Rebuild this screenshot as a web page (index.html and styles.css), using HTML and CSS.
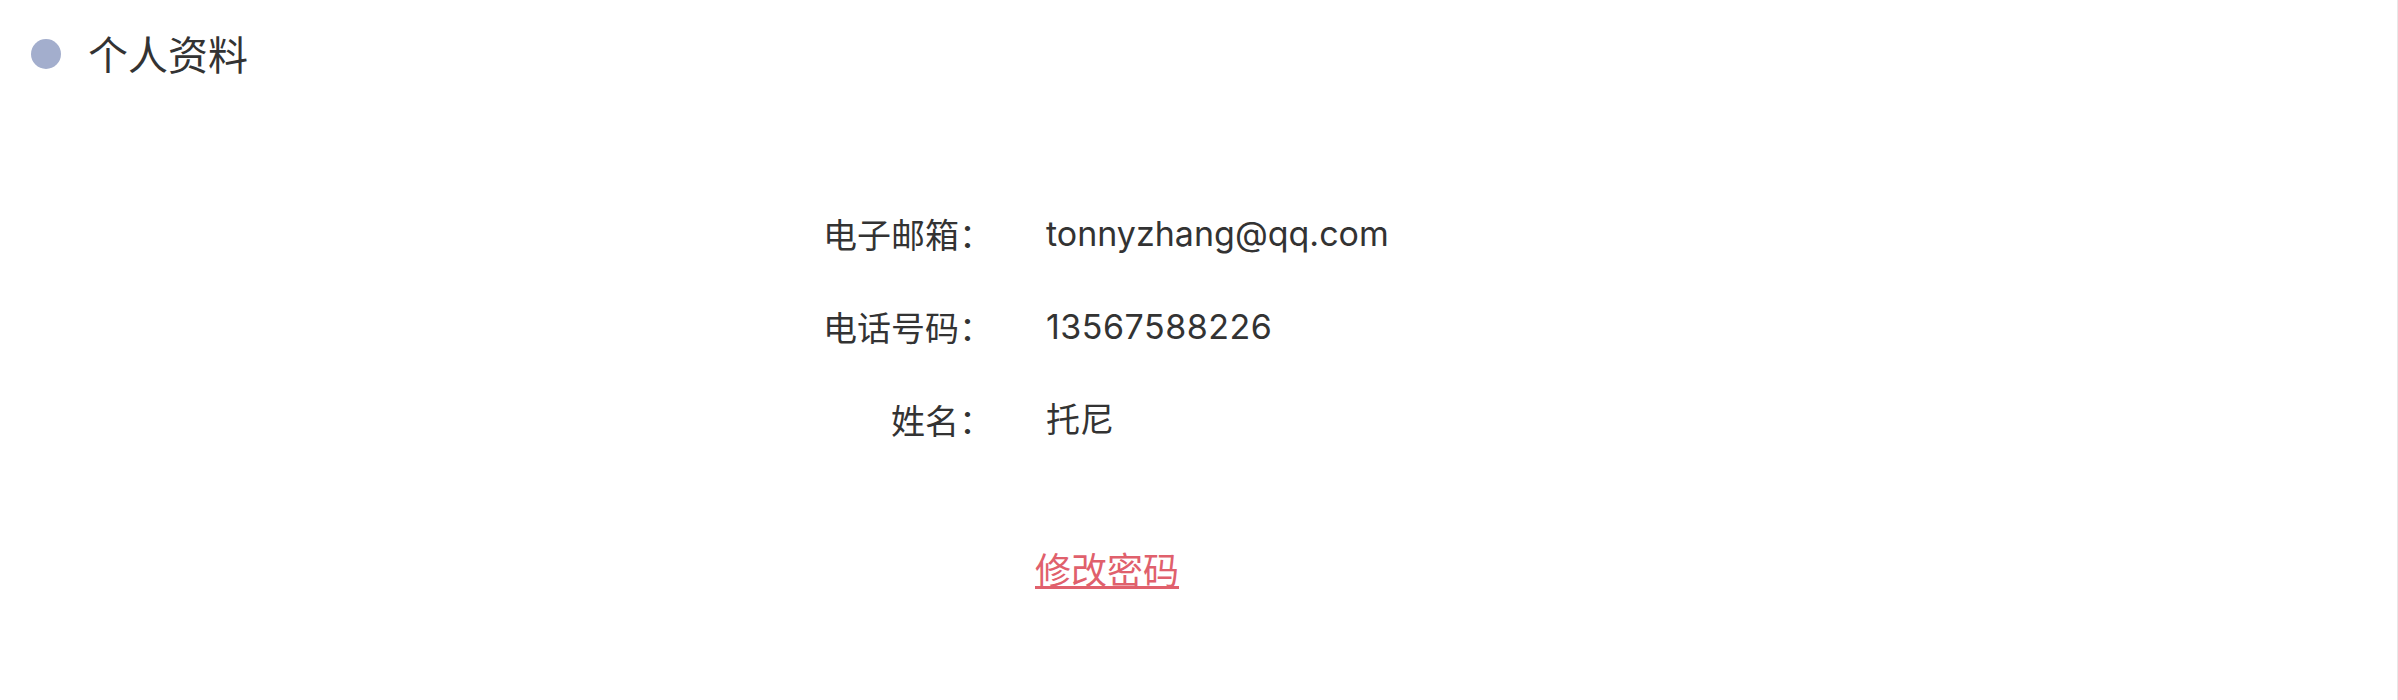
FILE: index.html
```html
<!DOCTYPE html>
<html lang="zh-CN">
<head>
<meta charset="utf-8">
<title>个人资料</title>
<link rel="stylesheet" href="styles.css">
</head>
<body>
<div class="page">
  <div class="header">
    <span class="dot"></span>
    <h2 class="title">个人资料</h2>
  </div>
  <div class="info">
    <div class="row"><span class="label">电子邮箱：</span><span class="value">tonnyzhang@qq.com</span></div>
    <div class="row"><span class="label">电话号码：</span><span class="value value-num">13567588226</span></div>
    <div class="row"><span class="label">姓名：</span><span class="value">托尼</span></div>
  </div>
  <div class="actions"><a class="link" href="#">修改密码</a></div>
</div>
</body>
</html>
```

FILE: styles.css
```css
html, body {
  margin: 0;
  padding: 0;
  background: #ffffff;
}
.page {
  box-sizing: border-box;
  width: 2398px;
  height: 700px;
  border-right: 1px solid #e8e8e8;
  color: #333333;
  font-family: Inter, "Noto Sans CJK SC", sans-serif;
}
.header {
  display: flex;
  align-items: center;
  padding: 33px 0 0 31px;
  height: 40px;
}
.dot {
  width: 30px;
  height: 30px;
  border-radius: 50%;
  background: #a3aecd;
  flex: none;
  margin-top: 2px;
}
.title {
  margin: 0 0 0 27px;
  font-family: "Noto Sans CJK SC", sans-serif;
  font-weight: 400;
  font-size: 40px;
  line-height: 40px;
  color: #333333;
}
.info {
  margin-top: 114px;
  padding-left: 823px;
}
.row {
  display: flex;
  align-items: center;
  height: 93px;
  gap: 53px;
}
.label {
  width: 170px;
  text-align: right;
  font-family: "Noto Sans CJK SC", sans-serif;
  font-size: 34px;
  line-height: 48px;
}
.value {
  font-family: Inter, "Noto Sans CJK SC", sans-serif;
  font-size: 34px;
  line-height: 48px;
}
.value-num {
  letter-spacing: 0.5px;
}
.actions {
  margin-top: 82px;
  padding-left: 1035px;
  line-height: 48px;
}
.link {
  font-family: "Liberation Serif", "Noto Sans CJK SC", serif;
  font-size: 36px;
  color: #e0606c;
  text-decoration: underline;
}
```
